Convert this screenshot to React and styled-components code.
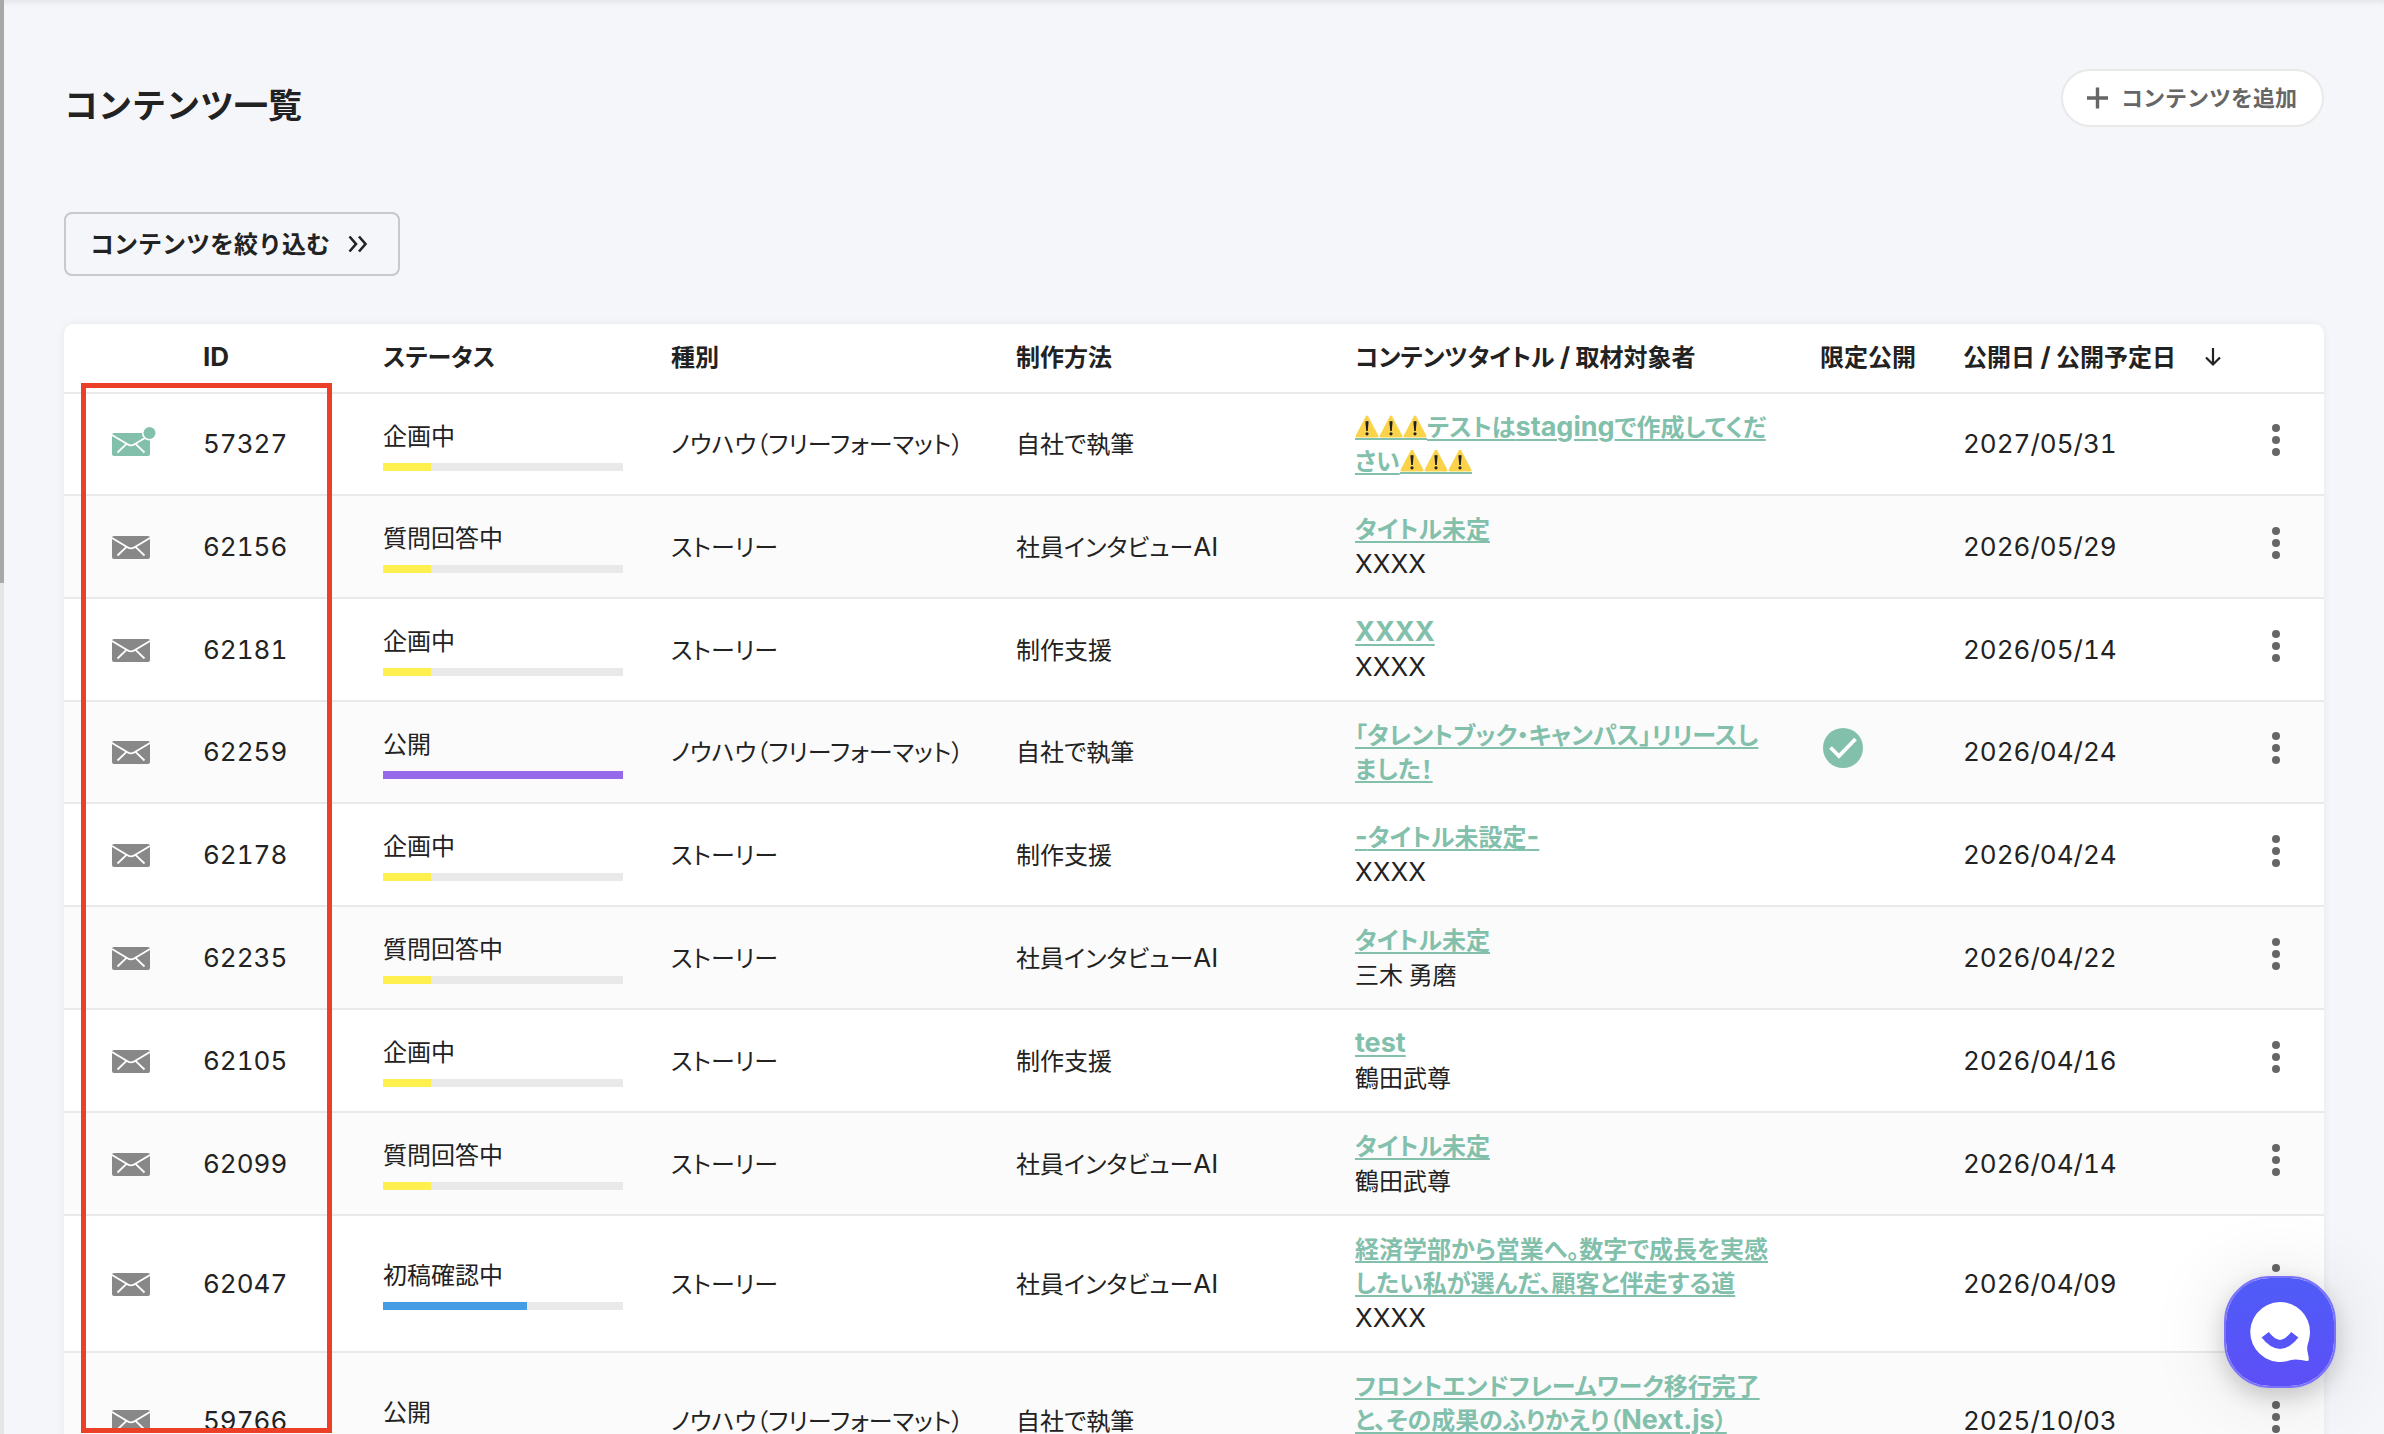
import React from "react"
import styled, { createGlobalStyle } from "styled-components"

const GlobalStyle = createGlobalStyle`
  * {
    box-sizing: border-box;
  }
  body {
    margin: 0;
    background-color: #f4f6fa;
    color: #222;
    font-family: "Noto Sans CJK JP", sans-serif;
    font-size: 24px;
    line-height: 34px;
  }
  button {
    font-family: inherit;
    cursor: pointer;
  }
`

const Page = styled.div`
  position: relative;
  display: flex;
  height: 100vh;
  overflow: hidden;
  box-shadow: inset 0 6px 6px -4px rgba(0, 0, 0, 0.08);
`
const ScrollTrack = styled.div`
  flex: 0 0 4px;
  background-color: #e6e6e6;
`
const ScrollThumb = styled.div`
  height: 583px;
  background-color: #a8a8a8;
`
const Main = styled.main`
  flex: 1;
  min-width: 0;
  padding: 69px 60px 0;
`
const Header = styled.header`
  display: flex;
  justify-content: space-between;
  align-items: flex-start;
  height: 143px;
`
const Title = styled.h1`
  margin: 11px 0 0;
  font-size: 34px;
  line-height: 48px;
  font-weight: 700;
`
const AddButton = styled.button`
  display: flex;
  align-items: center;
  gap: 12px;
  height: 58px;
  padding: 0 25px 0 24px;
  border: 2px solid #e9e9e9;
  border-radius: 29px;
  background-color: #fff;
  color: #666;
  font-size: 22px;
  font-weight: 700;
`
const FilterButton = styled.button`
  display: flex;
  align-items: center;
  gap: 18px;
  height: 64px;
  padding: 0 31px 0 24px;
  border: 2px solid #c9c9c9;
  border-radius: 8px;
  background-color: transparent;
  color: #222;
  font-size: 24px;
  font-weight: 700;
`
const ButtonLabel = styled.span`
  padding-bottom: 4px;
`
const Card = styled.section`
  margin-top: 48px;
  border-radius: 10px;
  background-color: #fff;
  box-shadow: 0 0 8px rgba(0, 0, 0, 0.06);
  overflow: hidden;
`
const Table = styled.table`
  width: 100%;
  table-layout: fixed;
  border-collapse: separate;
  border-spacing: 0;
  font-feature-settings: "palt";
`
const Col = styled.col`
  width: ${props => (props.$width ? `${props.$width}px` : "auto")};
`
const HeadCell = styled.th`
  height: 70px;
  padding: 0 0 4px;
  border-bottom: 2px solid #e9e9e9;
  text-align: left;
  font-weight: 700;
  white-space: nowrap;
`
const SortButton = styled.button`
  display: flex;
  align-items: center;
  gap: 28px;
  padding: 0;
  border: 0;
  background: none;
  color: inherit;
  font-size: 24px;
  line-height: 34px;
  font-weight: 700;
  font-feature-settings: inherit;
`
const Row = styled.tr`
  background-color: #fff;
  &:nth-child(even) {
    background-color: #fbfbfb;
  }
`
const Cell = styled.td`
  padding: 15px 0 17px;
  border-bottom: 2px solid #e9e9e9;
  vertical-align: middle;
`
const MailCell = styled(Cell)`
  padding: 16px 0 16px 48px;
`
const NumberCell = styled(Cell)`
  font-feature-settings: "tnum";
`
const StatusCell = styled(Cell)`
  padding: 16px 0;
`
const TitleCell = styled(Cell)`
  padding-right: 44px;
`
const IconCell = styled(Cell)`
  padding: 16px 0 24px 3px;
`
const Latin = styled.span`
  font-family: Inter, "Liberation Sans", sans-serif;
  font-size: 26px;
  line-height: 1;
`
const Track = styled.div`
  width: 240px;
  height: 8px;
  margin-top: 11px;
  background-color: #e9e9e9;
`
const Bar = styled.div`
  height: 8px;
  background-color: ${props => props.$color};
`
const TitleLink = styled.a`
  color: #82c0ac;
  font-weight: 700;
  text-decoration: underline;
  text-decoration-thickness: 2px;
  text-underline-offset: 3px;
  ${Latin} {
    font-size: 27px;
  }
`
const Person = styled.div`
  line-height: 35px;
`
const MoreButton = styled.button`
  display: block;
  width: 24px;
  height: 34px;
  margin-left: 33px;
  padding: 0;
  border: 0;
  background: none;
`
const Block = styled.svg`
  display: block;
  overflow: visible;
`
const Warning = styled.svg`
  vertical-align: -4px;
`
const Highlight = styled.div`
  position: absolute;
  top: 383px;
  bottom: 1px;
  left: 81px;
  width: 251px;
  border: 5px solid #eb4027;
  pointer-events: none;
`
const ChatButton = styled.button`
  position: fixed;
  right: 48px;
  bottom: 46px;
  width: 112px;
  height: 112px;
  padding: 0;
  border: 2px solid #7a72f8;
  border-radius: 46px;
  background: linear-gradient(#4f5cf8, #5d4ff6) padding-box;
  box-shadow: 0 8px 24px rgba(0, 0, 0, 0.18), 0 4px 80px rgba(0, 0, 0, 0.12);
`

const PlusIcon = () => (
  <Block width="22" height="22" viewBox="0 0 22 22" aria-hidden="true">
    <path d="M10.5 0.5V21.5M0 11H21" stroke="#666" strokeWidth="3.4" />
  </Block>
)

const ChevronsIcon = () => (
  <Block width="19" height="24" viewBox="0 0 19 24" fill="none" aria-hidden="true">
    <path
      d="M1.5 4.5L8 12L1.5 19.5M11 4.5L17.5 12L11 19.5"
      stroke="#222"
      strokeWidth="2.6"
    />
  </Block>
)

const ArrowDownIcon = () => (
  <Block width="18" height="20" viewBox="0 0 18 20" fill="none" aria-hidden="true">
    <path d="M9 2V18.5M2 11.5L9 18.5L16 11.5" stroke="#222" strokeWidth="2.2" />
  </Block>
)

const MailIcon = ({ unread }) => {
  const color = unread ? "#82c0ac" : "#888"
  return (
    <Block
      width="38"
      height="24"
      viewBox="0 0 38 24"
      fill="none"
      role="img"
      aria-label={unread ? "未読" : "既読"}
    >
      <rect y="1" width="38" height="23" rx="2" fill={color} />
      <path
        d="M0 3L15.5 12.2Q19 14.6 22.5 12.2L38 3M14.5 11.8L5.5 20.5M23.5 11.8L32.5 20.5"
        stroke="#fff"
        strokeWidth="1.8"
      />
      {unread && (
        <circle cx="37.5" cy="1" r="6.8" fill={color} stroke="#fff" strokeWidth="1.6" />
      )}
    </Block>
  )
}

const CheckIcon = () => (
  <Block
    width="40"
    height="40"
    viewBox="0 0 40 40"
    fill="none"
    role="img"
    aria-label="限定公開"
  >
    <circle cx="20" cy="20" r="20" fill="#82c0ac" />
    <path d="M7.5 19.5L16 28L32.5 11" stroke="#fff" strokeWidth="3.8" />
  </Block>
)

const MoreIcon = () => (
  <Block width="24" height="34" viewBox="0 0 24 34" fill="#666" aria-hidden="true">
    <circle cx="12" cy="5" r="4" />
    <circle cx="12" cy="17" r="4" />
    <circle cx="12" cy="29" r="4" />
  </Block>
)

const WarningIcon = () => (
  <Warning width="24" height="26" viewBox="0 0 24 26" role="img" aria-label="注意">
    <path
      d="M10.9 2.2Q12 0.6 13.1 2.2L23.4 21.8Q24 23.6 22.4 23.6H1.6Q0 23.6 0.6 21.8Z"
      fill="#fbd34b"
    />
    <path d="M10.4 7.6Q12 6.2 13.6 7.6L12.8 17H11.2Z" fill="#222" />
    <circle cx="12" cy="19.8" r="1.6" fill="#222" />
    <rect y="24" width="24" height="2" fill="#82c0ac" />
  </Warning>
)

const ChatIcon = () => (
  <Block width="108" height="108" viewBox="0 0 108 108" fill="none" aria-hidden="true">
    <path
      d="M54 24A30 30 0 0 1 84 54C84 60 82 65 81.2 69C80.8 73 83 78 82.8 81.5Q82.6 83.4 80.5 83C76 82.2 70 80.6 65 82A30 30 0 1 1 54 24Z"
      fill="#fff"
    />
    <path d="M39.2 56.8Q54 76 68.8 56.8" stroke="#5755f7" strokeWidth="9" />
  </Block>
)

// 英数字だけ欧文フォントで表示する
const Text = ({ children }) =>
  children.split(/(⚠|[!-~]+)/).map((part, i) => {
    if (part === "⚠") return <WarningIcon key={i} />
    return i % 2 ? <Latin key={i}>{part}</Latin> : part
  })

const STATUS = {
  企画中: { color: "#fff04f", progress: 20 },
  質問回答中: { color: "#fff04f", progress: 20 },
  初稿確認中: { color: "#479de3", progress: 60 },
  公開: { color: "#9668ea", progress: 100 },
}

const KNOWHOW = "ノウハウ（フリーフォーマット）"
const STORY = "ストーリー"
const SELF = "自社で執筆"
const AI = "社員インタビューAI"
const SUPPORT = "制作支援"

const contents = [
  { id: "57327", status: "企画中", type: KNOWHOW, method: SELF, title: "⚠⚠⚠テストはstagingで作成してください⚠⚠⚠", date: "2027/05/31", unread: true },
  { id: "62156", status: "質問回答中", type: STORY, method: AI, title: "タイトル未定", person: "XXXX", date: "2026/05/29" },
  { id: "62181", status: "企画中", type: STORY, method: SUPPORT, title: "XXXX", person: "XXXX", date: "2026/05/14" },
  { id: "62259", status: "公開", type: KNOWHOW, method: SELF, title: "「タレントブック・キャンパス」リリースしました！", date: "2026/04/24", limited: true },
  { id: "62178", status: "企画中", type: STORY, method: SUPPORT, title: "-タイトル未設定-", person: "XXXX", date: "2026/04/24" },
  { id: "62235", status: "質問回答中", type: STORY, method: AI, title: "タイトル未定", person: "三木 勇磨", date: "2026/04/22" },
  { id: "62105", status: "企画中", type: STORY, method: SUPPORT, title: "test", person: "鶴田武尊", date: "2026/04/16" },
  { id: "62099", status: "質問回答中", type: STORY, method: AI, title: "タイトル未定", person: "鶴田武尊", date: "2026/04/14" },
  { id: "62047", status: "初稿確認中", type: STORY, method: AI, title: "経済学部から営業へ。数字で成長を実感したい私が選んだ、顧客と伴走する道", person: "XXXX", date: "2026/04/09" },
  { id: "59766", status: "公開", type: KNOWHOW, method: SELF, title: "フロントエンドフレームワーク移行完了と、その成果のふりかえり（Next.js）", person: "XXXX", date: "2025/10/03" },
]

const columns = [139, 180, 288, 345, 339, null, 143, 265, 96]

const ContentRow = ({ item }) => {
  const { color, progress } = STATUS[item.status]
  return (
    <Row>
      <MailCell>
        <MailIcon unread={item.unread} />
      </MailCell>
      <NumberCell>
        <Text>{item.id}</Text>
      </NumberCell>
      <StatusCell>
        {item.status}
        <Track>
          <Bar $color={color} style={{ width: `${progress}%` }} />
        </Track>
      </StatusCell>
      <Cell>{item.type}</Cell>
      <Cell>
        <Text>{item.method}</Text>
      </Cell>
      <TitleCell>
        <TitleLink href="#">
          <Text>{item.title}</Text>
        </TitleLink>
        {item.person && (
          <Person>
            <Text>{item.person}</Text>
          </Person>
        )}
      </TitleCell>
      <IconCell>{item.limited && <CheckIcon />}</IconCell>
      <NumberCell>
        <Text>{item.date}</Text>
      </NumberCell>
      <IconCell>
        <MoreButton type="button" aria-label="メニュー">
          <MoreIcon />
        </MoreButton>
      </IconCell>
    </Row>
  )
}

const App = () => {
  return (
    <>
      <GlobalStyle />
      <Page>
        <ScrollTrack>
          <ScrollThumb />
        </ScrollTrack>
        <Main>
          <Header>
            <Title>コンテンツ一覧</Title>
            <AddButton type="button">
              <PlusIcon />
              <ButtonLabel>コンテンツを追加</ButtonLabel>
            </AddButton>
          </Header>
          <FilterButton type="button">
            <ButtonLabel>コンテンツを絞り込む</ButtonLabel>
            <ChevronsIcon />
          </FilterButton>
          <Card>
            <Table>
              <colgroup>
                {columns.map((width, i) => (
                  <Col key={i} $width={width} />
                ))}
              </colgroup>
              <thead>
                <tr>
                  <HeadCell />
                  <HeadCell>
                    <Text>ID</Text>
                  </HeadCell>
                  <HeadCell>ステータス</HeadCell>
                  <HeadCell>種別</HeadCell>
                  <HeadCell>制作方法</HeadCell>
                  <HeadCell>
                    <Text>コンテンツタイトル / 取材対象者</Text>
                  </HeadCell>
                  <HeadCell>限定公開</HeadCell>
                  <HeadCell>
                    <SortButton type="button">
                      <span>
                        <Text>公開日 / 公開予定日</Text>
                      </span>
                      <ArrowDownIcon />
                    </SortButton>
                  </HeadCell>
                  <HeadCell />
                </tr>
              </thead>
              <tbody>
                {contents.map(item => (
                  <ContentRow key={item.id} item={item} />
                ))}
              </tbody>
            </Table>
          </Card>
        </Main>
        <Highlight />
        <ChatButton type="button" aria-label="チャット">
          <ChatIcon />
        </ChatButton>
      </Page>
    </>
  )
}
export default App
